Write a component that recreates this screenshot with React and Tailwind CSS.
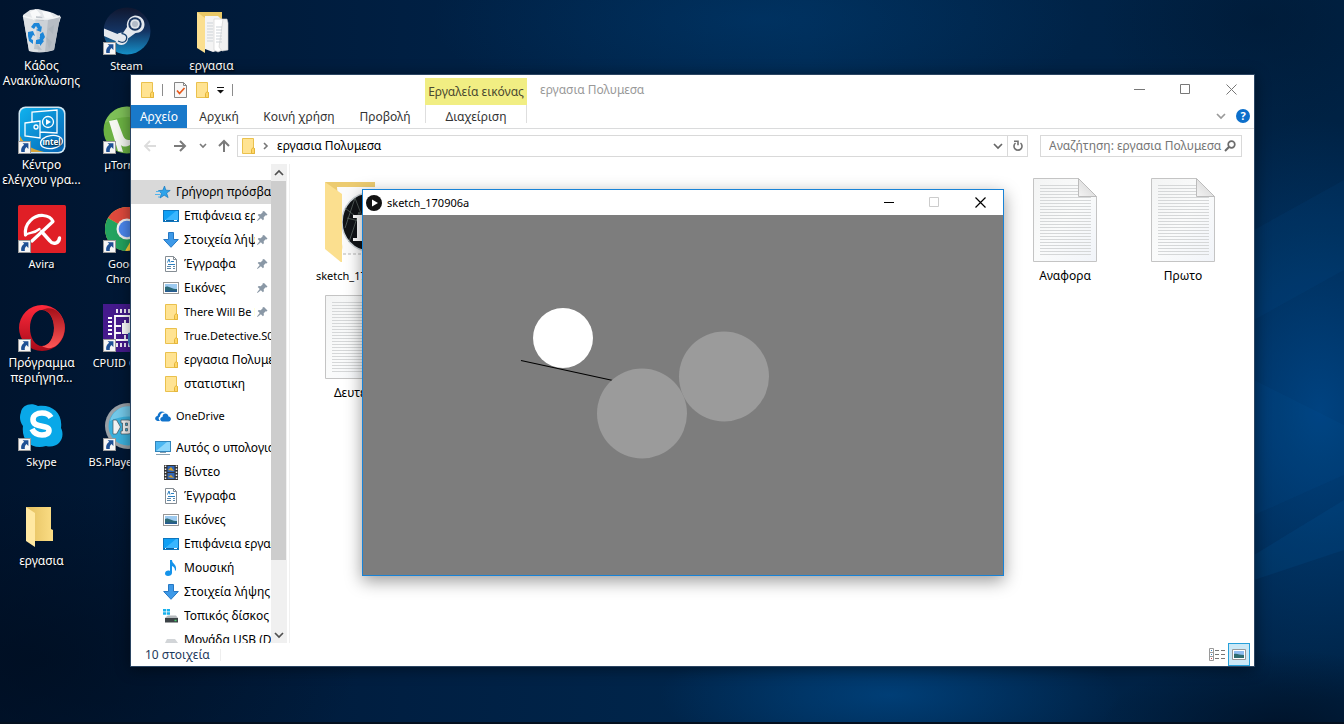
import React from "react";

/* ---------- desktop icon artwork (48 x 48) ---------- */

function Shortcut() {
  return (
    <g>
      <rect x="0.5" y="35.5" width="12" height="12" fill="#f6f6f6" stroke="#9a9a9a" />
      <path d="M4.6 37.3h5.8v5.8l-2-2c-1.3 1.100-1.800 2.400-1.600 5H3.300c-.6-3 .2-5.400 2.900-7.300z" fill="#1d4f94" />
    </g>
  );
}

function Art({ children, shortcut }) {
  return (
    <svg viewBox="0 0 48 48" className="size-12 shrink-0" aria-hidden="true">
      {children}
      {shortcut && <Shortcut />}
    </svg>
  );
}

const RecycleBin = () => (
  <Art>
    <path d="M5 8l7-5 8-1 8 2 7 2 8 4-2 6H7z" fill="#e4e7ea" />
    <path d="M5 9l6 35c5 2 18 2 25-1l6-33-12 3-14-1z" fill="#cdd2d7" />
    <path d="M5 9l6 35 9 1-3-34z" fill="#dde1e4" />
    <path d="M30 13l12-3-6 33-9 2z" fill="#b7bdc4" />
    <path d="M12 5l6-3 5 6-8 5zM24 4l8 1 4 6-9 1z" fill="#f8f9fa" />
    <path d="M18 9l6 1 2 4-8-1zM30 22l6-4-1 9zM17 34l7 9-8-1zM28 30l6 5-3 7z" fill="#a9b1b9" opacity=".6" />
    <path d="M5 9c10 4 28 4 37 0" fill="none" stroke="#f3f5f6" strokeWidth="1.500" />
    <path d="M13 20l3-4h5l2 4 1-1-1 6-5-2 2-1-2-3-2 3zM10 25l5-1 2 5-2-1-2 4 2 1v4l-4-3-1-5zM18 33l4-1-1-2 5 4-4 5v-2h-4zM22 27l3-2 2 5-2 3-3-1z" fill="#1c86d8" />
  </Art>
);

const Steam = () => (
  <Art shortcut>
    <defs>
      <linearGradient id="steam" x1="0" y1="0" x2="0" y2="1">
        <stop offset="0" stopColor="#10172f" />
        <stop offset=".5" stopColor="#143463" />
        <stop offset="1" stopColor="#1590c8" />
      </linearGradient>
    </defs>
    <circle cx="24" cy="24" r="23.500" fill="url(#steam)" />
    <path d="M1 21.500l13.500 5.500c2-1.200 4-1.300 5.500-1l4-6c-1-6 3-11 8-11.500 6 0 9.500 4 9.500 9 0 5-4 8.500-9 8.500l-7.500 5.500c0 3.500-3 6.500-6.500 6.500-3 0-5-1.500-6-4L1 29z" fill="#e3e8ee" />
    <circle cx="32" cy="17" r="6.700" fill="#17345f" />
    <circle cx="32" cy="17" r="4.800" fill="#dfe4ea" />
    <circle cx="32" cy="17" r="3" fill="#b3bcc9" />
    <path d="M15 34l2.500 1c2.500 1 5-.3 5.800-2.300.8-2.200 0-4.600-2.300-5.500l-2.500-.8" fill="none" stroke="#17416f" strokeWidth="1.300" />
  </Art>
);

const FolderDocs = () => (
  <Art>
    <path d="M9 5h25v39l-17-3z" fill="#e9c866" />
    <path d="M17 9h13l5 5v28l-10 3-8-3z" fill="#f4f4f4" />
    <path d="M26 12h9l4 5v24l-9 4-4-2z" fill="#fff" stroke="#d2d2d2" strokeWidth=".7" />
    <path d="M35 12h4l1 4v27l-6 1-3-4z" fill="#f1f1f1" stroke="#cfcfcf" strokeWidth=".6" />
    <path d="M19 16h6M19 19h6M19 22h6M19 25h6M19 28h6M19 31h6M19 34h6M28 20h6M28 23h6M28 26h6M28 29h6M28 32h6M28 35h6" stroke="#cdd3d8" />
    <path d="M9 5l8 6v35l-8-5z" fill="#fbdf8f" />
  </Art>
);

const Intel = () => (
  <Art shortcut>
    <defs>
      <linearGradient id="intel" x1="0" y1="0" x2="1" y2="1">
        <stop offset="0" stopColor="#10b2ee" />
        <stop offset="1" stopColor="#0764b4" />
      </linearGradient>
    </defs>
    <rect x=".5" y=".5" width="47" height="47" rx="7" fill="#cfe6f2" />
    <rect x="2" y="2" width="44" height="44" rx="6" fill="url(#intel)" />
    <path d="M2 30c5 9 11 13 24 16H8c-4 0-6-2-6-6z" fill="#d7a53a" />
    <g fill="none" stroke="#fff" strokeWidth="1.300">
      <path d="M14 10V6l25-2v23l-17-1M7 17l15-2v17l-15-2zM14 10v6" />
      <circle cx="30" cy="16" r="5.500" />
      <circle cx="18" cy="21" r="2" />
      <ellipse cx="33.500" cy="36" rx="11" ry="6.500" transform="rotate(-8 34 36)" />
    </g>
    <path d="M28 13l5 3-5 3z" fill="#fff" />
    <text x="33.500" y="39" textAnchor="middle" fontSize="8" fontWeight="700" fill="#fff">intel</text>
  </Art>
);

const UTorrent = () => (
  <Art shortcut>
    <circle cx="24" cy="24" r="23.500" fill="#6bb243" />
    <path d="M2 17a23 23 0 0 1 44 0c-12-8-30-8-44 0z" fill="#86c661" opacity=".7" />
    <path d="M6 15l8-1.500 6 16c1.500 4 5 5.500 8 4V12h8v22l8 5-8 6-9-6c-4 2-7 2-9 0l2 7-5-1z" fill="#f5f7f2" />
  </Art>
);

const Avira = () => (
  <Art shortcut>
    <rect width="48" height="48" rx="1.500" fill="#e01f26" />
    <g fill="none" stroke="#fff" strokeLinecap="round" strokeLinejoin="round">
      <path d="M7.500 30C6 18 16 10 25 10.500c5 .3 8.500 2.500 10 6L14 36" strokeWidth="3.200" />
      <path d="M7.500 30c4-3 8-1 14-6" strokeWidth="2.400" />
      <path d="M23.500 26.500L32 36c3 4 9 2.500 9.500-3" strokeWidth="3.400" />
    </g>
  </Art>
);

const Chrome = () => (
  <Art shortcut>
    <circle cx="24" cy="24" r="22" fill="#fcd039" />
    <path d="M24 24L5 13a22 22 0 0 1 38 0z" fill="#df4a3d" />
    <path d="M24 2a22 22 0 0 1 20 13H24z" fill="#df4a3d" />
    <path d="M5 13a22 22 0 0 0 17 33l11-19-9-3z" fill="#23a35f" />
    <circle cx="24" cy="24" r="10.500" fill="#f2f2f2" />
    <circle cx="24" cy="24" r="8.300" fill="#4c87ee" />
  </Art>
);

const Opera = () => (
  <Art shortcut>
    <defs>
      <linearGradient id="opera" x1="0" y1="0" x2="0" y2="1">
        <stop offset="0" stopColor="#ff2a3c" />
        <stop offset="1" stopColor="#a70b19" />
      </linearGradient>
      <linearGradient id="operaEdge" x1="0" y1="0" x2="0" y2="1">
        <stop offset="0" stopColor="#a41019" />
        <stop offset="1" stopColor="#ff5757" />
      </linearGradient>
    </defs>
    <path fillRule="evenodd" d="M24 1a23 23 0 1 0 0 46 23 23 0 0 0 0-46zm0 5c7 0 12 8 12 18s-5 18-12 18-12-8-12-18S17 6 24 6z" fill="url(#opera)" />
    <path d="M24 6c6-3 11-2 15 1 10 9 10 25 0 34-5 4-10 4-15 1 7 0 12-8 12-18S31 6 24 6z" fill="url(#operaEdge)" />
  </Art>
);

const Cpuid = () => (
  <Art shortcut>
    <rect width="48" height="48" fill="#451a8c" />
    <g stroke="#fff" strokeWidth="1.800" fill="none">
      <path d="M14 5v4M18 5v4M22 5v4M26 5v4M30 5v4M34 5v4M14 39v4M18 39v4M22 39v4M26 39v4M30 39v4" />
      <path d="M5 14h4M5 18h4M5 22h4M5 26h4M5 30h4M39 14h4M39 18h4M39 22h4" />
      <path d="M12 36V12h24v24zM12 22h6M12 29h6M22 16v3M27 12v7M22 31v5" />
    </g>
    <rect x="19" y="19" width="12" height="11" fill="#fff" />
    <path d="M25 29l8-2 10 3v9c-3 5-6 8-10 9-5-2-7-6-8-10z" fill="#3c7ec2" />
  </Art>
);

const Skype = () => (
  <Art shortcut>
    <path d="M3 9C4 2 13-1 20 3c14-2 25 7 23 22 5 10-3 21-15 18C14 47 3 38 5 23 2 19 1 14 3 9z" fill="#09a8e8" />
    <path d="M33 14.500c-2-3.500-5.500-4.500-9-4.500-5 0-9 2.500-9 6.500 0 9.500 16 4.500 16 11 0 3-3 4.500-7 4.500-4.500 0-8-2-10-6" fill="none" stroke="#fff" strokeWidth="5.600" />
  </Art>
);

const BsPlayer = () => (
  <Art shortcut>
    <circle cx="25" cy="23" r="23" fill="#99a0a6" />
    <circle cx="25" cy="23" r="19.500" fill="#3cb1dd" />
    <path d="M7 18a19 19 0 0 1 37 0c-10-6-26-6-37 0z" fill="#8bd3ee" opacity=".7" />
    <path d="M10 17h3.500l4 7-4 7H10z" fill="#f4f4f4" stroke="#46535c" strokeWidth=".7" />
    <path
      fillRule="evenodd"
      d="M18 17h7c4 0 5 5 2 7 3 2 2 7-2 7h-7v-3h1.500v-8H18zM22.500 20v2.500h2V20zM22.500 25.500V28h2v-2.500z"
      fill="#f4f4f4"
      stroke="#46535c"
      strokeWidth=".7"
    />
    <path d="M30 17h9l-6 7 6 7h-9z" fill="#f4f4f4" />
  </Art>
);

const FolderEmpty = () => (
  <Art>
    <defs>
      <linearGradient id="fold" x1="0" y1="0" x2="1" y2="0">
        <stop offset="0" stopColor="#e3bf5e" />
        <stop offset="1" stopColor="#fbdd85" />
      </linearGradient>
    </defs>
    <path d="M8 5h25v22l2 1v11H16z" fill="url(#fold)" />
    <path d="M8 5l9 6v34l-9-6z" fill="#ffe8a2" />
  </Art>
);

/* ---------- small 16 px icons ---------- */

function Mini({ children }) {
  return (
    <svg viewBox="0 0 16 16" className="size-4 shrink-0" aria-hidden="true">
      {children}
    </svg>
  );
}

const MiniFolder = () => (
  <Mini>
    <path d="M2.500.5h11v10h1v5h-12z" fill="#ffe392" stroke="#eac14d" />
    <path d="M11.500 15.500v-4l1.500-2 1.500 1v5z" fill="#ffd766" stroke="#e3b53c" />
  </Mini>
);
const Star = () => (
  <Mini>
    <path d="M9.500 2l1.300 4.200 4.400.3-3.600 2.500 1.500 4.600-3.900-2.400L5 14l1.400-4.700L3.500 6.600l4.300-.3z" fill="#2ea3ea" stroke="#1479c0" strokeWidth=".7" />
    <path d="M1 7.500h4M0 10.500h5M3 13h2" stroke="#52b3ec" />
  </Mini>
);
const Screen = () => (
  <Mini>
    <rect x=".5" y="2.500" width="15" height="11" fill="#0fa0f5" stroke="#0d75bd" />
    <path d="M1 13L13 3h2v10z" fill="#39b6ff" />
    <path d="M1 12.500h14" stroke="#0c62a4" />
    <path d="M2 12.500h1M11 12.500h3" stroke="#fff" />
  </Mini>
);
const Down = () => (
  <Mini>
    <path d="M5.500.5h5v7h4.800L8 15.300.7 7.500h4.800z" fill="#3d99e8" stroke="#2678c4" />
  </Mini>
);
const Doc = () => (
  <Mini>
    <path d="M2.500.5h8l3 3v12h-11z" fill="#fff" stroke="#858d94" />
    <path d="M10.500.5v3h3" fill="none" stroke="#858d94" />
    <path d="M4.500 6.500L6 3l1 3.500M8 5.500h3M5 8.500h7" fill="none" stroke="#2f80bf" />
    <path d="M4 10.500h4M4 12.500h4M10 10.500h2M10 12.500h2" stroke="#5d87a8" />
  </Mini>
);
const Picture = () => (
  <Mini>
    <rect x=".5" y="2.500" width="15" height="11" fill="#fff" stroke="#979797" />
    <rect x="2" y="4" width="12" height="8" fill="#9dcaef" />
    <path d="M2 7c3-2 6 2 12 2v3H2z" fill="#2c6977" />
    <path d="M2 10.500h12V12H2z" fill="#265b92" />
  </Mini>
);
const Cloud = () => (
  <Mini>
    <path d="M5 13H2.500c-3.300-.5-3-4.500 0-5C3 4 6.500 2 10 4.500c-3.500-.3-5 1.500-5 4-2 1-1.500 3 0 4.500z" fill="#1173cc" />
    <path d="M7.500 13.500c-3-.5-3-4 0-4.500C7.500 4.500 13 4.500 13.500 8.500c3.300.5 3.300 4.500 0 5z" fill="#1173cc" />
  </Mini>
);
const Computer = () => (
  <Mini>
    <rect x=".5" y="1.500" width="15" height="10" fill="#4bb7f2" stroke="#3385bb" />
    <path d="M1 11L12 2h3v9z" fill="#8cd6fb" />
    <path d="M5 12.500h6M1 14.500h14" stroke="#86a0b2" />
  </Mini>
);
const Video = () => (
  <Mini>
    <rect x="1" y="1" width="14" height="15" fill="#333" />
    <path d="M2.500 1.500v14M13.500 1.500v14" stroke="#eee" strokeDasharray="1.500 1.500" strokeWidth="1.500" />
    <rect x="4.500" y="2" width="7" height="6" fill="#2d62b5" />
    <rect x="4.500" y="9" width="7" height="6" fill="#3568b6" />
    <path d="M5 6l3-3 3 4zM5 13l3-2 3 3z" fill="#d5a02a" />
  </Mini>
);
const Music = () => (
  <Mini>
    <path d="M7 0h2c0 4 5 4 4 10l-1 1c0-3-1-4-3-5v7c0 2-2 3-4 3s-3-1-3-2.500C2 11 5 10 7 11z" fill="#1593ea" />
  </Mini>
);
const Disk = () => (
  <Mini>
    <path d="M0 1h3v2.500H0zM3.700 1H7v2.500H3.700zM0 4.200h3v2.500H0zM3.700 4.200H7v2.500H3.700z" fill="#18b1ed" />
    <path d="M3 9l2-1.500h8L15 10H2z" fill="#b5b9bd" />
    <path d="M2 10h13v4.500H2z" fill="#3c4347" />
    <path d="M11.500 12.500h2" stroke="#44d16d" strokeWidth="1.500" />
  </Mini>
);
const Usb = () => (
  <Mini>
    <path d="M4 7h8l3 4H2z" fill="#d2d5d8" />
    <path d="M2 11h13v3H2z" fill="#8f969b" />
  </Mini>
);
const Pin = () => (
  <svg viewBox="0 0 12 12" className="size-3 shrink-0" aria-hidden="true">
    <path d="M8 1l3.500 3.500-1 1-.8-.2-2 2 .2 2-1 1-2-2L1.500 11 1 10.500l2.700-3.400-2-2 1-1 2 .2 2-2L6.500 1.500z" fill="#8a98a6" />
  </svg>
);

function Chevron({ up, tone }) {
  return (
    <svg viewBox="0 0 10 10" className={tone + " size-[10px] shrink-0"} aria-hidden="true">
      <path d={up ? "M1 7l4-4 4 4" : "M1 3l4 4 4-4"} fill="none" stroke="currentColor" strokeWidth="1.700" />
    </svg>
  );
}

/* ---------- data ---------- */

const desktop = [
  { label: "Κάδος Ανακύκλωσης", icon: RecycleBin, cell: "col-start-1 row-start-1" },
  { label: "Κέντρο ελέγχου γρα...", icon: Intel, cell: "col-start-1 row-start-2" },
  { label: "Avira", icon: Avira, cell: "col-start-1 row-start-3" },
  { label: "Πρόγραμμα περιήγησ...", icon: Opera, cell: "col-start-1 row-start-4" },
  { label: "Skype", icon: Skype, cell: "col-start-1 row-start-5" },
  { label: "εργασια", icon: FolderEmpty, cell: "col-start-1 row-start-6" },
  { label: "Steam", icon: Steam, cell: "col-start-2 row-start-1" },
  { label: "µTorrent", icon: UTorrent, cell: "col-start-2 row-start-2" },
  { label: "Google\nChrome", icon: Chrome, cell: "col-start-2 row-start-3" },
  { label: "CPUID CPU-Z", icon: Cpuid, cell: "col-start-2 row-start-4" },
  { label: "BS.Player FREE", icon: BsPlayer, cell: "col-start-2 row-start-5" },
  { label: "εργασια", icon: FolderDocs, cell: "col-start-3 row-start-1" },
];

const quick = [
  { label: "Επιφάνεια εργασίας", icon: Screen, pin: true },
  { label: "Στοιχεία λήψης", icon: Down, pin: true },
  { label: "Έγγραφα", icon: Doc, pin: true },
  { label: "Εικόνες", icon: Picture, pin: true },
  { label: "There Will Be Blood", icon: MiniFolder, pin: true },
  { label: "True.Detective.S01", icon: MiniFolder },
  { label: "εργασια Πολυμεσα", icon: MiniFolder },
  { label: "στατιστικη", icon: MiniFolder },
];

const computer = [
  { label: "Βίντεο", icon: Video },
  { label: "Έγγραφα", icon: Doc },
  { label: "Εικόνες", icon: Picture },
  { label: "Επιφάνεια εργασίας", icon: Screen },
  { label: "Μουσική", icon: Music },
  { label: "Στοιχεία λήψης", icon: Down },
  { label: "Τοπικός δίσκος", icon: Disk },
  { label: "Μονάδα USB (D:)", icon: Usb },
];

const labelSize = (label) => (/[\u0370-\u03ff]/.test(label) ? "text-[12px]" : "text-[11px]");

/* ---------- parts ---------- */

function Wallpaper() {
  return (
    <svg className="absolute inset-0 size-full" viewBox="0 0 1344 724" preserveAspectRatio="none" aria-hidden="true">
      <defs>
        <linearGradient id="base" x1="0" y1="0" x2="1" y2="0">
          <stop offset="0" stopColor="#00142e" />
          <stop offset=".12" stopColor="#001937" />
          <stop offset=".3" stopColor="#001f42" />
          <stop offset=".6" stopColor="#00284f" />
          <stop offset=".8" stopColor="#002347" />
          <stop offset="1" stopColor="#002244" />
        </linearGradient>
        <radialGradient id="glowR">
          <stop offset="0" stopColor="#00509a" stopOpacity=".7" />
          <stop offset="1" stopColor="#00509a" stopOpacity="0" />
        </radialGradient>
        <radialGradient id="glowB">
          <stop offset="0" stopColor="#004e92" stopOpacity=".6" />
          <stop offset="1" stopColor="#004e92" stopOpacity="0" />
        </radialGradient>
        <radialGradient id="dark">
          <stop offset="0" stopColor="#000d1f" stopOpacity=".7" />
          <stop offset="1" stopColor="#000d1f" stopOpacity="0" />
        </radialGradient>
      </defs>
      <rect width="1344" height="724" fill="url(#base)" />
      <ellipse cx="1320" cy="410" rx="200" ry="290" fill="url(#glowR)" />
      <ellipse cx="890" cy="695" rx="230" ry="70" fill="url(#glowB)" />
      <ellipse cx="760" cy="20" rx="330" ry="100" fill="url(#glowB)" opacity=".45" />
      <ellipse cx="30" cy="660" rx="330" ry="170" fill="url(#dark)" />
      <ellipse cx="1260" cy="20" rx="160" ry="110" fill="url(#dark)" opacity=".4" />
      <ellipse cx="1280" cy="730" rx="180" ry="80" fill="url(#dark)" />
      <path d="M1254 230l90-50v90l-90 50z" fill="#0068b8" opacity=".08" />
      <path d="M1254 555l90-55v50l-90 30z" fill="#0068b8" opacity=".12" />
      <path d="M1254 380l90 45v50l-90 40z" fill="#0068b8" opacity=".08" />
      <rect y="722" width="1344" height="2" fill="#03101f" />
    </svg>
  );
}

function TreeRow({ item, level }) {
  const Icon = item.icon;
  return (
    <li>
      <button
        type="button"
        className={
          (level === 0 ? "pl-6 " : "pl-8 ") +
          (item.selected ? "bg-[#d9d9d9] " : "") +
          labelSize(item.label) +
          " flex h-6 w-full items-center gap-[5px] overflow-hidden text-left whitespace-nowrap"
        }
      >
        <Icon />
        <span className="min-w-0 flex-1 overflow-hidden">{item.label}</span>
        {item.pin && (
          <span className="-ml-1 pr-[3px]">
            <Pin />
          </span>
        )}
      </button>
    </li>
  );
}

function Page() {
  return (
    <svg viewBox="0 0 64 84" className="h-[84px] w-16" aria-hidden="true">
      <defs>
        <linearGradient id="paper" x1="0" y1="0" x2="1" y2="1">
          <stop offset="0" stopColor="#f3f4f4" />
          <stop offset=".5" stopColor="#fafbfb" />
          <stop offset="1" stopColor="#f1f4f9" />
        </linearGradient>
        <linearGradient id="curl" x1="0" y1="1" x2="1" y2="0">
          <stop offset="0" stopColor="#f4f4f4" />
          <stop offset="1" stopColor="#cfcfcf" />
        </linearGradient>
      </defs>
      <path d="M.5.500h45l18 18v65H.5z" fill="url(#paper)" stroke="#c4c4c4" />
      <path
        d="M7 7.500h38M7 10.500h38M7 13.500h38M7 16.500h38M7 19.500h51M7 22.500h51M7 25.500h51M7 28.500h51M7 31.500h51M7 34.500h51M7 37.500h51M7 40.500h51M7 43.500h51M7 46.500h51M7 49.500h51M7 52.500h51M7 55.500h51M7 58.500h51M7 61.500h51M7 64.500h51M7 67.500h51M7 70.500h51M7 73.500h51M7 76.500h51"
        stroke="#d5d7d8"
      />
      <path d="M45.500.500v18h18z" fill="url(#curl)" stroke="#bcbcbc" />
    </svg>
  );
}

function SketchFolder() {
  return (
    <svg viewBox="0 0 64 84" className="h-[84px] w-16" aria-hidden="true">
      <path d="M0 4h50v62l-32 6z" fill="#eccb70" />
      <path d="M12 9h38v64l-32 4z" fill="#fbfbfb" />
      <path d="M18 76h32" stroke="#b5b5b5" strokeDasharray="3 2" />
      <ellipse cx="44" cy="44" rx="27" ry="29" fill="#111417" stroke="#cbd2d6" strokeWidth="1.500" />
      <path d="M20 50l10-30 10 26-20-16M24 64l10-30 12 34M22 40l24 6" fill="none" stroke="#64706c" strokeWidth=".7" />
      <path d="M28 37h13v3h-3v20h4v3H28v-3h4V40h-4z" fill="#fff" />
      <path d="M0 4l17 12v69L0 71z" fill="#fbdf8f" />
    </svg>
  );
}

function FileTile({ label, children, cell }) {
  return (
    <button type="button" className={cell + " " + labelSize(label) + " flex h-[117px] flex-col items-center gap-[5px] pt-[3px]"}>
      {children}
      <span className="leading-[18px]">{label}</span>
    </button>
  );
}

function Explorer() {
  return (
    <section
      aria-label="εργασια Πολυμεσα"
      className="absolute top-[74px] right-[89px] bottom-[57px] left-[130px] flex flex-col border border-[#2b4562] bg-white shadow-[0_2px_14px_rgba(0,0,0,0.45)]"
    >
      {/* title bar and tabs */}
      <header className="flex h-[54px] shrink-0 border-b border-[#dadbdc]">
        <div className="flex w-[294px] shrink-0 flex-col">
          <div className="flex h-[30px] items-center pl-2">
            <MiniFolder />
            <span className="ml-[7px] h-3 w-px bg-[#8c8c8c]" />
            <button type="button" aria-label="Ιδιότητες" className="ml-[10px]">
              <Mini>
                <path d="M1.500.5h9l3 3v12h-12z" fill="#f7f7f7" stroke="#858585" />
                <path d="M10.500.5v3h3" fill="none" stroke="#858585" />
                <path d="M4 8.500l2.500 3L11.500 6" fill="none" stroke="#e8591c" strokeWidth="1.700" />
              </Mini>
            </button>
            <button type="button" aria-label="Νέος φάκελος" className="ml-[5px]">
              <MiniFolder />
            </button>
            <button type="button" aria-label="Προσαρμογή" className="ml-[7px]">
              <svg viewBox="0 0 7 8" className="h-2 w-[7px]" aria-hidden="true">
                <path d="M0 1.500h7" stroke="#111" />
                <path d="M0 4h7L3.500 7.500z" fill="#111" />
              </svg>
            </button>
            <span className="ml-2 h-3 w-px bg-[#8c8c8c]" />
          </div>
          <nav className="flex h-[23px] items-stretch text-[#333]">
            <button type="button" className="w-14 bg-[#1979ca] text-white">Αρχείο</button>
            <button type="button" className="w-16">Αρχική</button>
            <button type="button" className="w-24">Κοινή χρήση</button>
            <button type="button" className="w-[76px]">Προβολή</button>
          </nav>
        </div>
        <div className="flex w-[102px] shrink-0 flex-col pt-[3px]">
          <div className="flex h-[27px] items-center justify-center bg-[#f1ee83] whitespace-nowrap text-[#4a4930]">Εργαλεία εικόνας</div>
          <button type="button" className="h-[18px] border-x border-[#dedede] pt-[5px] leading-[14px] text-[#333]">Διαχείριση</button>
        </div>
        <h1 className="pt-[6px] pl-[13px] leading-[18px] text-[#999]">εργασια Πολυμεσα</h1>
        <div className="ml-auto flex flex-col">
          <div className="flex h-[28px] items-center text-[#777]">
            <button type="button" aria-label="Ελαχιστοποίηση" className="flex w-[45px] justify-center">
              <svg viewBox="0 0 11 11" className="size-[11px]"><path d="M0 5.500h11" stroke="currentColor" /></svg>
            </button>
            <button type="button" aria-label="Μεγιστοποίηση" className="flex w-[46px] justify-center">
              <svg viewBox="0 0 11 11" className="size-[11px]"><path d="M.5.500h9v9h-9z" fill="none" stroke="currentColor" /></svg>
            </button>
            <button type="button" aria-label="Κλείσιμο" className="flex w-[46px] justify-center">
              <svg viewBox="0 0 11 11" className="size-[11px]"><path d="M.5.500l10 10M10.500.500l-10 10" stroke="currentColor" /></svg>
            </button>
          </div>
          <div className="flex h-[25px] items-center justify-end gap-[10px] pr-1">
            <button type="button" aria-label="Ανάπτυξη κορδέλας"><Chevron tone="text-[#9a9a9a]" /></button>
            <button type="button" aria-label="Βοήθεια" className="flex size-[14px] items-center justify-center rounded-full bg-[#0c6fcb] text-[11px] leading-none font-bold text-white">?</button>
          </div>
        </div>
      </header>

      {/* navigation row */}
      <div className="flex h-[34px] shrink-0 items-center pr-3 pl-3">
        <button type="button" aria-label="Πίσω" className="text-[#dcdcdc]">
          <svg viewBox="0 0 14 12" className="h-3 w-[14px]"><path d="M13 6H2M7 1L2 6l5 5" fill="none" stroke="currentColor" strokeWidth="1.800" /></svg>
        </button>
        <button type="button" aria-label="Εμπρός" className="ml-4 text-[#7b7b7b]">
          <svg viewBox="0 0 14 12" className="h-3 w-[14px]"><path d="M1 6h11M7 1l5 5-5 5" fill="none" stroke="currentColor" strokeWidth="2" /></svg>
        </button>
        <button type="button" aria-label="Πρόσφατα" className="ml-3 text-[#7b7b7b]">
          <svg viewBox="0 0 8 6" className="h-[6px] w-2"><path d="M1 1l3 3 3-3" fill="none" stroke="currentColor" strokeWidth="1.600" /></svg>
        </button>
        <button type="button" aria-label="Επάνω" className="ml-[11px] text-[#7b7b7b]">
          <svg viewBox="0 0 12 14" className="h-[14px] w-3"><path d="M6 13V2M1 7l5-5 5 5" fill="none" stroke="currentColor" strokeWidth="2" /></svg>
        </button>
        <div className="ml-[7px] flex h-[22px] min-w-0 flex-1 items-center border border-[#d9d9d9] pl-[2px]">
          <MiniFolder />
          <svg viewBox="0 0 6 8" className="ml-[7px] h-2 w-[6px]" aria-hidden="true"><path d="M1 1l3 3-3 3" fill="none" stroke="#777" strokeWidth="1.600" /></svg>
          <button type="button" className="ml-2 whitespace-nowrap text-black">εργασια Πολυμεσα</button>
          <button type="button" aria-label="Προηγούμενες θέσεις" className="mr-1 ml-auto"><Chevron tone="text-[#666]" /></button>
          <button type="button" aria-label="Ανανέωση" className="flex h-full w-5 items-center justify-center border-l border-[#d9d9d9] text-[#707070]">
            <svg viewBox="0 0 12 12" className="size-3">
              <path d="M8.500 3a4 4 0 1 1-5 0M2 1.300h4v4" fill="none" stroke="currentColor" strokeWidth="1.600" />
            </svg>
          </button>
        </div>
        <label className="ml-3 flex h-[22px] w-[202px] items-center border border-[#d9d9d9] pr-[5px] pl-2">
          <input
            type="text"
            aria-label="Αναζήτηση"
            placeholder="Αναζήτηση: εργασια Πολυμεσα"
            className="min-w-0 flex-1 bg-transparent outline-none placeholder:text-[#767676]"
          />
          <svg viewBox="0 0 12 12" className="size-3 shrink-0 text-[#6b6b6b]" aria-hidden="true">
            <circle cx="7.500" cy="4.500" r="3.300" fill="none" stroke="currentColor" strokeWidth="1.700" />
            <path d="M5.200 6.800L1 11" stroke="currentColor" strokeWidth="2" />
          </svg>
        </label>
      </div>

      {/* tree and files */}
      <div className="flex min-h-0 flex-1 pt-px">
        <nav aria-label="Φάκελοι" className="w-[140px] shrink-0 overflow-hidden pt-4">
          <ul>
            <TreeRow level={0} item={{ label: "Γρήγορη πρόσβαση", icon: Star, selected: true }} />
            {quick.map((it) => (
              <TreeRow key={it.label} level={1} item={it} />
            ))}
          </ul>
          <ul className="mt-2">
            <TreeRow level={0} item={{ label: "OneDrive", icon: Cloud }} />
          </ul>
          <ul className="mt-2">
            <TreeRow level={0} item={{ label: "Αυτός ο υπολογιστής", icon: Computer }} />
            {computer.map((it) => (
              <TreeRow key={it.label} level={1} item={it} />
            ))}
          </ul>
        </nav>
        <div className="flex w-4 shrink-0 flex-col bg-[#f0f0f0]">
          <button type="button" aria-label="Κύλιση επάνω" className="flex h-[17px] items-center justify-center"><Chevron up tone="text-[#505050]" /></button>
          <div className="mr-px flex-[380] bg-[#cdcdcd]" />
          <div className="flex-[66]" />
          <button type="button" aria-label="Κύλιση κάτω" className="flex h-[17px] items-center justify-center"><Chevron tone="text-[#505050]" /></button>
        </div>
        <main className="ml-[2px] grid flex-1 auto-rows-[117px] grid-cols-[repeat(8,118px)] content-start border-l border-[#f0f0f0] pt-[11px] pl-2">
          <FileTile label="sketch_170906a" cell="col-start-1"><SketchFolder /></FileTile>
          <FileTile label="Αναφορα" cell="col-start-7"><Page /></FileTile>
          <FileTile label="Πρωτο" cell="col-start-8"><Page /></FileTile>
          <FileTile label="Δευτερο" cell="col-start-1"><Page /></FileTile>
        </main>
      </div>

      {/* status bar */}
      <footer className="flex h-[23px] shrink-0 items-center pr-1 pl-[14px] text-[#1e395b]">
        <span>10 στοιχεία</span>
        <span className="ml-[10px] h-3 w-px bg-[#eeeeee]" />
        <button type="button" aria-label="Λεπτομέρειες" className="mr-[3px] ml-auto">
          <svg viewBox="0 0 16 13" className="h-[13px] w-4">
            <path d="M.5.500h4v12h-4zM.5 4.500h4M.5 8.500h4" fill="none" stroke="#9a9a9a" />
            <path d="M6 2.500h4M12 2.500h4M6 6.500h4M12 6.500h4M6 10.500h4M12 10.500h4" stroke="#777" />
            <path d="M2 2.500h1M2 6.500h1" stroke="#3a83c4" />
            <path d="M2 10.500h1" stroke="#c44" />
          </svg>
        </button>
        <button type="button" aria-label="Μεγάλα εικονίδια" className="flex h-[23px] w-[22px] items-center justify-center border border-[#26a0da] bg-[#cbe8f6]">
          <svg viewBox="0 0 14 11" className="h-[11px] w-[14px]">
            <path d="M.5.500h13v10H.5z" fill="#fff" stroke="#979797" />
            <path d="M2 2h10v7H2z" fill="#8fbdf0" />
            <path d="M2 5c3-1 5 1 10 1v3H2z" fill="#2f6d70" />
          </svg>
        </button>
      </footer>
    </section>
  );
}

function SketchWindow() {
  return (
    <section
      aria-label="sketch_170906a"
      className="absolute top-[189px] left-[362px] w-[642px] border border-[#1883d7] bg-white text-black shadow-[0_5px_16px_rgba(0,0,0,0.4)]"
    >
      <header className="flex h-[25px] items-center pl-[3px]">
        <svg viewBox="0 0 16 16" className="size-4" aria-hidden="true">
          <circle cx="8" cy="8" r="8" fill="#121212" />
          <path d="M6 4.500v7L12 8z" fill="#fff" />
        </svg>
        <h2 className="ml-[5px] text-[11px] leading-4">sketch_170906a</h2>
        <div className="ml-auto flex">
          <button type="button" aria-label="Ελαχιστοποίηση" className="flex w-[46px] justify-center">
            <svg viewBox="0 0 11 11" className="size-[11px]"><path d="M0 5.500h10" stroke="#000" /></svg>
          </button>
          <button type="button" aria-label="Μεγιστοποίηση" disabled className="flex w-[45px] justify-center">
            <svg viewBox="0 0 11 11" className="size-[11px]"><path d="M.5.500h9v9h-9z" fill="none" stroke="#ccc" /></svg>
          </button>
          <button type="button" aria-label="Κλείσιμο" className="flex w-[46px] justify-center">
            <svg viewBox="0 0 11 11" className="size-[11px]"><path d="M.5.500l10 10M10.500.500l-10 10" stroke="#000" strokeWidth="1.200" /></svg>
          </button>
        </div>
      </header>
      <svg viewBox="0 0 640 360" className="block w-full bg-[#7d7d7d]" role="img" aria-label="sketch">
        <circle cx="200" cy="123" r="30" fill="#fff" />
        <path d="M158 145.500L250 165.500" stroke="#000" strokeWidth="1.100" />
        <circle cx="279" cy="198.500" r="45" fill="#9b9b9b" />
        <circle cx="361" cy="161.500" r="45" fill="#9b9b9b" />
      </svg>
    </section>
  );
}

export default function App() {
  return (
    <div className="relative h-screen overflow-hidden bg-[#001a3a] font-['Noto_Sans','Open_Sans',sans-serif] text-[12px] leading-4 text-black">
      <Wallpaper />
      <div className="relative grid auto-rows-[99px] grid-cols-[repeat(3,83px)] gap-x-[2px] pt-[7px]">
        {desktop.map(({ label, icon: Icon, cell }) => (
          <button
            type="button"
            key={cell}
            className={cell + " " + labelSize(label) + " flex flex-col items-center gap-[3px] leading-[15px] text-white [text-shadow:1px_1px_2px_#000]"}
          >
            <Icon />
            <span className="w-full whitespace-pre-line">{label}</span>
          </button>
        ))}
      </div>
      <Explorer />
      <SketchWindow />
    </div>
  );
}
